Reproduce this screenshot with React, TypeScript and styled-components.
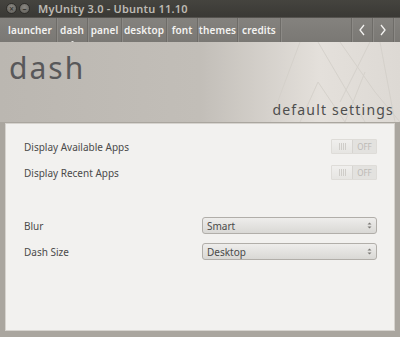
import React from "react";
import styled, { createGlobalStyle } from "styled-components";

const Global = createGlobalStyle`
  html, body { margin: 0; padding: 0; }
  body { background: #a9a59f; font-family: "Noto Sans", "Open Sans", "DejaVu Sans", sans-serif; }
`;

const Window = styled.div`
  width: 400px;
  height: 337px;
  display: flex;
  flex-direction: column;
  background: #aaa69f;
  overflow: hidden;
`;

const TitleBar = styled.div`
  height: 17px;
  background: linear-gradient(#45443f, #3a3935);
  display: flex;
  align-items: center;
  padding-left: 6px;
  gap: 2px;
`;

const WinBtn = styled.div`
  width: 11px;
  height: 11px;
  border-radius: 50%;
  background: radial-gradient(circle at 50% 35%, #8a8882, #5f5d58);
  border: 1px solid #2e2d2a;
  box-sizing: border-box;
  display: flex;
  align-items: center;
  justify-content: center;
  color: #3a3935;
  font-size: 8px;
  font-weight: bold;
  line-height: 1;
`;

const Title = styled.div`
  margin-left: 6px;
  color: #bdbab3;
  font-size: 11px;
  font-weight: 600;
  letter-spacing: 0.2px;
`;

const TabBar = styled.div`
  height: 25px;
  background: linear-gradient(#84827e, #7a7874);
  border-top: 1px solid #55534f;
  box-sizing: border-box;
  display: flex;
  align-items: stretch;
`;

const Cell = styled.div<{ $w: number; $active?: boolean }>`
  position: relative;
  width: ${(p) => p.$w}px;
  flex: 0 0 ${(p) => p.$w}px;
  box-sizing: border-box;
  display: flex;
  align-items: center;
  justify-content: center;
  color: #f4f3f1;
  font-size: 10px;
  font-weight: 600;
  letter-spacing: 0.1px;
  border-right: 1px solid #6e6c68;
  box-shadow: 1px 0 0 #8c8a86;
  &::after {
    content: "";
    display: ${(p) => (p.$active ? "block" : "none")};
    position: absolute;
    bottom: -2px;
    left: 50%;
    width: 3px;
    height: 3px;
    margin-left: -1px;
    background: #f0efed;
    border-radius: 50%;
  }
`;

const Spacer = styled.div`
  flex: 1;
  border-right: 1px solid #6e6c68;
  box-shadow: 1px 0 0 #8c8a86;
`;

const Header = styled.div`
  position: relative;
  height: 80px;
  background: linear-gradient(90deg, #bbb7b1 0%, #c2beb8 50%, #e4e0db 80%, #ddd9d4 100%);
  display: flex;
  flex-direction: column;
  justify-content: space-between;
  overflow: hidden;
`;

const Lines = styled.svg`
  position: absolute;
  left: 0;
  top: 0;
`;

const PageTitle = styled.div`
  position: relative;
  margin: 6px 0 0 9px;
  font-size: 30px;
  color: #58585a;
  letter-spacing: 2px;
  line-height: 40px;
`;

const Subtitle = styled.div`
  position: relative;
  align-self: flex-end;
  margin: 0 6px 3px 0;
  font-size: 14px;
  color: #4e4e4e;
  letter-spacing: 1.2px;
  line-height: 18px;
`;

const Panel = styled.div`
  margin: 1px 5px 6px 5px;
  flex: 1;
  background: #f2f1ef;
  border: 1px solid #d6d3ce;
  padding: 14px 17px 0 18px;
  display: flex;
  flex-direction: column;
`;

const Row = styled.div<{ $gap?: number }>`
  height: 17px;
  display: flex;
  align-items: center;
  justify-content: space-between;
  margin-bottom: ${(p) => p.$gap ?? 9}px;
`;

const Label = styled.div`
  font-size: 10px;
  color: #4a4a4a;
`;

const Toggle = styled.div`
  width: 46px;
  height: 15px;
  display: flex;
  border: 1px solid #dedcd8;
  box-sizing: border-box;
  background: #ebeae7;
  border-radius: 1px;
`;

const Grip = styled.div`
  flex: 1;
  display: flex;
  align-items: center;
  justify-content: center;
  gap: 1px;
  background: linear-gradient(#f0efed, #e6e5e2);
  & span { width: 1px; height: 7px; background: #cfcdc9; }
`;

const Off = styled.div`
  width: 23px;
  display: flex;
  align-items: center;
  justify-content: center;
  font-size: 8px;
  color: #bbb9b5;
  background: #e3e2df;
  border-left: 1px solid #d6d4d0;
`;

const Select = styled.div`
  width: 175px;
  height: 17px;
  box-sizing: border-box;
  border: 1px solid #b1aea9;
  border-radius: 3px;
  background: linear-gradient(#eeedeb, #d9d8d5);
  display: flex;
  align-items: center;
  justify-content: space-between;
  padding: 0 4px 0 4px;
  font-size: 10px;
  color: #4a4a4a;
`;

const SelectArrows = () => (
  <svg width="5" height="9" viewBox="0 0 5 9">
    <path d="M0.5 3.5 L2.5 1.5 L4.5 3.5 Z" fill="#7a7875" />
    <path d="M0.5 5.5 L2.5 7.5 L4.5 5.5 Z" fill="#7a7875" />
  </svg>
);

const ToggleSwitch = () => (
  <Toggle>
    <Grip>
      <span />
      <span />
      <span />
      <span />
    </Grip>
    <Off>OFF</Off>
  </Toggle>
);

const Chevron = ({ dir }: { dir: "l" | "r" }) => (
  <svg width="6" height="12" viewBox="0 0 6 12">
    <path
      d={dir === "l" ? "M5 1 L1 6 L5 11" : "M1 1 L5 6 L1 11"}
      fill="none"
      stroke="#f4f3f1"
      strokeWidth="1.3"
    />
  </svg>
);

const tabs: [string, number][] = [
  ["launcher", 57],
  ["dash", 31],
  ["panel", 34],
  ["desktop", 45],
  ["font", 31],
  ["themes", 40],
  ["credits", 43],
];

export default function App() {
  return (
    <Window>
      <Global />
      <TitleBar>
        <WinBtn>×</WinBtn>
        <WinBtn>–</WinBtn>
        <Title>MyUnity 3.0 - Ubuntu 11.10</Title>
      </TitleBar>
      <TabBar>
        {tabs.map(([t, w]) => (
          <Cell key={t} $w={w} $active={t === "dash"} style={t === "launcher" ? { paddingLeft: 4 } : undefined}>
            {t}
          </Cell>
        ))}
        <Spacer />
        <Cell $w={21}>
          <Chevron dir="l" />
        </Cell>
        <Cell $w={21}>
          <Chevron dir="r" />
        </Cell>
        <Cell $w={6} style={{ borderRight: "none", boxShadow: "none" }} />
      </TabBar>
      <Header>
        <Lines width="400" height="80" viewBox="0 0 400 80">
          <g stroke="#d4d0ca" strokeWidth="1" fill="none" opacity="0.9">
            <path d="M300 0 L270 80" />
            <path d="M318 0 L365 80" />
            <path d="M318 40 L300 80" />
            <path d="M318 40 L345 80" />
            <path d="M340 0 L375 50" />
            <path d="M370 0 L340 60" />
            <path d="M375 50 L400 80" />
            <path d="M380 0 L395 80" />
            <path d="M365 30 L345 80" />
          </g>
        </Lines>
        <PageTitle>dash</PageTitle>
        <Subtitle>default settings</Subtitle>
      </Header>
      <Panel>
        <Row>
          <Label>Display Available Apps</Label>
          <ToggleSwitch />
        </Row>
        <Row $gap={36}>
          <Label>Display Recent Apps</Label>
          <ToggleSwitch />
        </Row>
        <Row>
          <Label>Blur</Label>
          <Select>
            Smart
            <SelectArrows />
          </Select>
        </Row>
        <Row>
          <Label>Dash Size</Label>
          <Select>
            Desktop
            <SelectArrows />
          </Select>
        </Row>
      </Panel>
    </Window>
  );
}
